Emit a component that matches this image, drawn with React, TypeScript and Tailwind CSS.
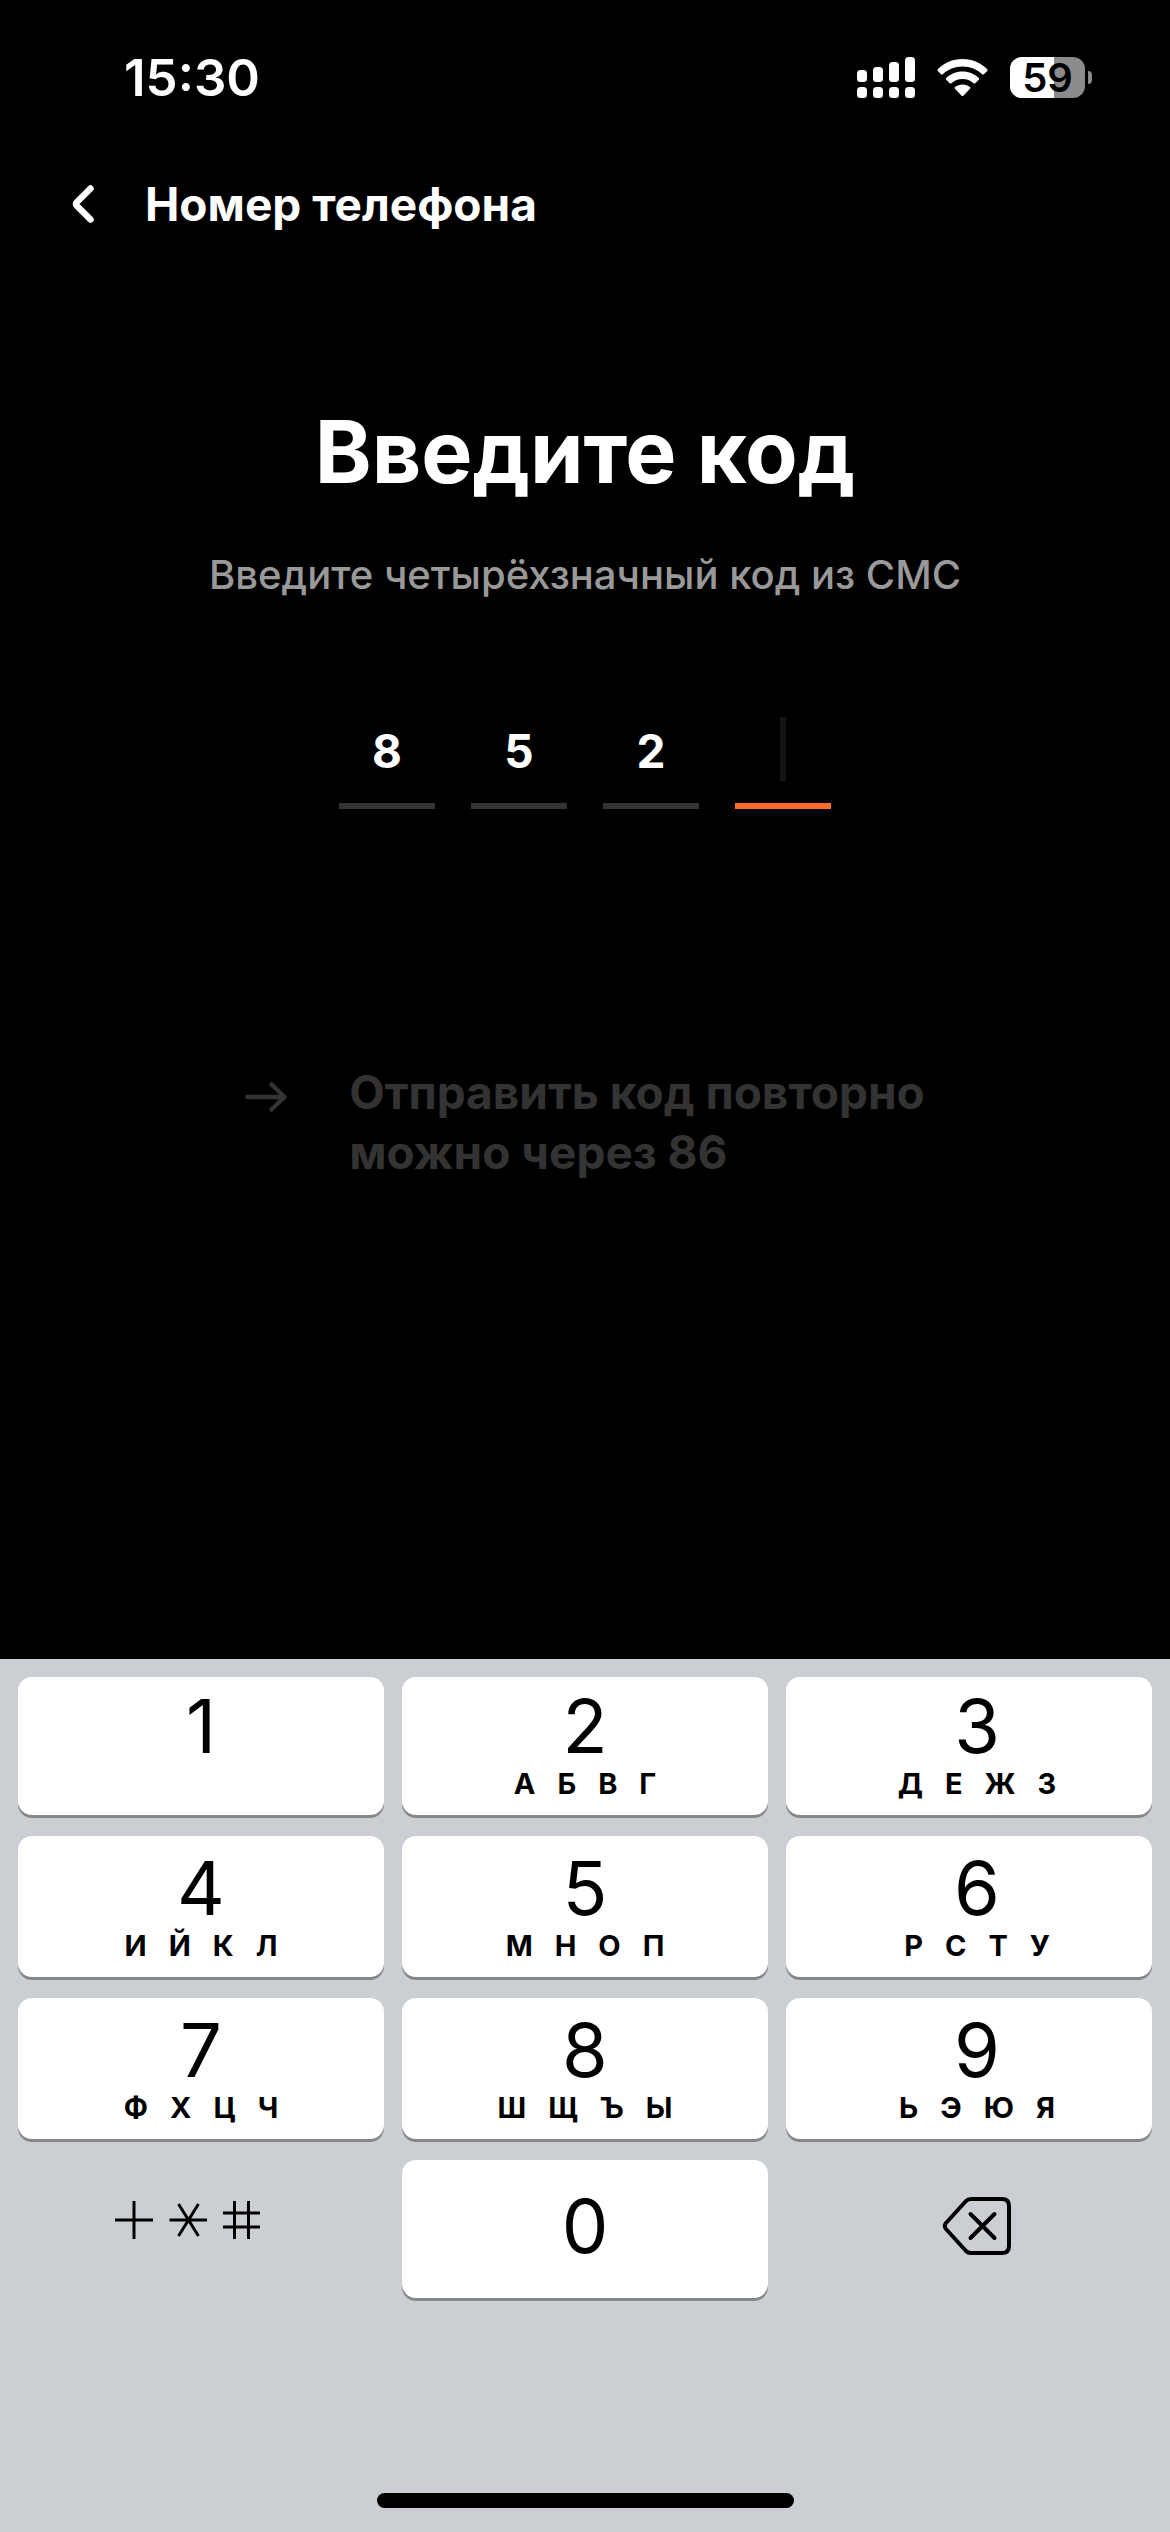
import { useState } from "react";
import type { ReactNode } from "react";

interface DigitKey {
  digit: string;
  letters: string[];
}

const DIGIT_KEYS: DigitKey[] = [
  { digit: "1", letters: [] },
  { digit: "2", letters: ["А", "Б", "В", "Г"] },
  { digit: "3", letters: ["Д", "Е", "Ж", "З"] },
  { digit: "4", letters: ["И", "Й", "К", "Л"] },
  { digit: "5", letters: ["М", "Н", "О", "П"] },
  { digit: "6", letters: ["Р", "С", "Т", "У"] },
  { digit: "7", letters: ["Ф", "Х", "Ц", "Ч"] },
  { digit: "8", letters: ["Ш", "Щ", "Ъ", "Ы"] },
  { digit: "9", letters: ["Ь", "Э", "Ю", "Я"] },
];

const CODE_LENGTH = 4;

function SignalIcon() {
  const tops = [13, 10, 5, 0];
  return (
    <svg width="58" height="41" viewBox="0 0 58 41" fill="white" aria-hidden="true">
      {tops.map((top, i) => (
        <g key={top}>
          <rect x={i * 16} y={top} width="10" height={25 - top} rx="3.5" />
          <rect x={i * 16} y="30" width="10" height="11" rx="3.5" />
        </g>
      ))}
    </svg>
  );
}

function WifiIcon() {
  return (
    <svg width="51" height="38" viewBox="0 0 51 38" fill="white" aria-hidden="true">
      <path d="M25.5 0C35.400 0 44 3.900 50.200 10.200C50.700 10.700 50.700 11.400 50.200 11.900L46.900 15.200C46.400 15.700 45.700 15.700 45.200 15.200C40.100 10.300 33.200 7.400 25.500 7.400C17.800 7.400 10.900 10.300 5.800 15.200C5.300 15.700 4.600 15.700 4.100 15.200L0.800 11.900C0.300 11.400 0.300 10.700 0.800 10.200C7 3.900 15.600 0 25.500 0Z" />
      <path d="M25.500 12.600C31.900 12.600 37.600 15.100 41.800 19.100C42.300 19.600 42.300 20.300 41.800 20.800L38.300 24.200C37.800 24.700 37.100 24.700 36.600 24.200C33.600 21.500 29.800 20 25.500 20C21.200 20 17.400 21.500 14.400 24.200C13.900 24.700 13.200 24.700 12.700 24.200L9.200 20.800C8.700 20.300 8.700 19.600 9.200 19.100C13.400 15.100 19.100 12.600 25.500 12.600Z" />
      <path d="M25.500 25.400C28.400 25.400 31 26.400 33 28C33.500 28.500 33.500 29.200 33 29.700L26.400 36.800C25.900 37.300 25.100 37.300 24.600 36.800L18 29.700C17.500 29.200 17.500 28.500 18 28C20 26.400 22.600 25.400 25.500 25.400Z" />
    </svg>
  );
}

function Battery({ level }: { level: number }) {
  return (
    <div className="flex items-center gap-[3px]">
      <div className="relative flex h-[41px] w-[75px] items-center justify-center rounded-[12px] bg-[#8a8b8c]">
        <div className="absolute inset-y-0 left-0 rounded-l-[12px] bg-white" style={{ width: `${level}%` }} />
        <span className="relative text-[40px] leading-none font-semibold text-black">{level}</span>
      </div>
      <div className="h-[13px] w-1 rounded-r-full bg-[#8a8b8c]" />
    </div>
  );
}

function StatusBar() {
  return (
    <div className="flex h-[155px] items-center justify-between pr-[78px] pl-[124px]">
      <span className="text-[51px] leading-none font-semibold">15:30</span>
      <div className="flex items-center gap-[22px]">
        <SignalIcon />
        <WifiIcon />
        <Battery level={59} />
      </div>
    </div>
  );
}

function Key({ digit, letters, onPress }: DigitKey & { onPress: (digit: string) => void }) {
  return (
    <button
      type="button"
      onClick={() => onPress(digit)}
      className="flex flex-col items-center justify-end rounded-[14px] bg-white pb-[13px] shadow-[0_3px_0_#85878a] nth-[3n]:pl-4"
    >
      <span className="text-[74px] leading-[80px]">{digit}</span>
      <span className="flex h-9 gap-[22px] text-[29px] leading-9 font-bold">
        {letters.map((letter) => (
          <span key={letter}>{letter}</span>
        ))}
      </span>
    </button>
  );
}

function IconKey({ label, className, children, onPress }: {
  label: string;
  className: string;
  children: ReactNode;
  onPress?: () => void;
}) {
  return (
    <button
      type="button"
      aria-label={label}
      onClick={onPress}
      className={`flex items-center justify-center ${className}`}
    >
      {children}
    </button>
  );
}

export default function App() {
  const [code, setCode] = useState("852");

  const addDigit = (digit: string) => {
    setCode((prev) => (prev.length < CODE_LENGTH ? prev + digit : prev));
  };

  const removeDigit = () => setCode((prev) => prev.slice(0, -1));

  return (
    <div className="flex min-h-screen flex-col bg-black font-['Inter',sans-serif] text-white">
      <StatusBar />

      <header className="flex h-[98px] items-center gap-[51px] pl-[72px]">
        <button type="button" aria-label="Назад">
          <svg width="22" height="38" viewBox="0 0 22 38" fill="none" stroke="white" strokeWidth="6.500" strokeLinecap="round" strokeLinejoin="round">
            <path d="M18.500 3.500L5 17Q3.200 19 5 21L18.500 34.500" />
          </svg>
        </button>
        <span className="text-[46px] leading-none font-bold">Номер телефона</span>
      </header>

      <main className="flex flex-1 flex-col items-center pt-[151px]">
        <h1 className="text-[86px] leading-[96px] font-bold">Введите код</h1>
        <p className="mt-[50px] text-[40px] leading-[50px] font-medium text-[#999999]">
          Введите четырёхзначный код из СМС
        </p>

        <div className="mt-[99px] flex gap-9">
          {Array.from({ length: CODE_LENGTH }, (_, i) => {
            const active = i === code.length;
            return (
              <div key={i} className="relative">
                <input
                  type="text"
                  inputMode="numeric"
                  aria-label={`Цифра ${i + 1}`}
                  value={code[i] ?? ""}
                  readOnly
                  className={`block h-[110px] w-24 border-b-[6px] bg-transparent text-center text-[46px] font-bold outline-none ${
                    active ? "border-[#ff6d29]" : "border-[#333333]"
                  }`}
                />
                {active && <span className="absolute top-[18px] left-[45px] h-16 w-[6px] bg-[#141414]" />}
              </div>
            );
          })}
        </div>

        <button
          type="button"
          disabled
          className="mt-[253px] flex items-start gap-[62px] text-left text-[46px] leading-[60px] font-bold text-[#333333]"
        >
          <svg className="mt-5" width="42" height="30" viewBox="0 0 42 30" fill="none" stroke="currentColor" strokeWidth="4.500" strokeLinecap="round" strokeLinejoin="round">
            <path d="M2.500 15H39M26.500 2.500L39.500 15L26.500 27.500" />
          </svg>
          <span>
            Отправить код повторно
            <br />
            можно через 86
          </span>
        </button>
      </main>

      <div className="bg-[#cbced3] px-[18px] pt-[18px] pb-6 text-black">
        <div className="grid grid-cols-3 grid-rows-[138px_141px_141px_138px] gap-x-[18px] gap-y-[21px]">
          {DIGIT_KEYS.map((key) => (
            <Key key={key.digit} {...key} onPress={addDigit} />
          ))}
          <IconKey label="Символы" className="pr-[26px] pb-[18px]">
            <svg width="146" height="38" viewBox="0 0 146 38" fill="none" stroke="black" strokeWidth="3">
              <path d="M0 19H38M19 0V38" />
              <path d="M54.500 19H92M63.500 3L83.500 35M83.500 3L63.500 35" />
              <path d="M108 12H145M108 26H145M119.500 0V38M133.500 0V38" />
            </svg>
          </IconKey>
          <button
            type="button"
            onClick={() => addDigit("0")}
            className="flex items-center justify-center rounded-[14px] bg-white pb-[6px] text-[74px] leading-[80px] shadow-[0_3px_0_#85878a]"
          >
            0
          </button>
          <IconKey label="Удалить" className="pb-[6px] pl-4" onPress={removeDigit}>
            <svg width="70" height="60" viewBox="0 0 70 60" fill="none" stroke="black" strokeWidth="4" strokeLinecap="round" strokeLinejoin="round">
              <path d="M29 3H60Q67 3 67 10V50Q67 57 60 57H29Q26 57 24 55L4 33Q1.500 30 4 27L24 5Q26 3 29 3Z" />
              <path d="M28.500 18L52.500 42M52.500 18L28.500 42" />
            </svg>
          </IconKey>
        </div>
        <div className="mx-auto mt-[195px] h-[15px] w-[417px] rounded-full bg-black" />
      </div>
    </div>
  );
}
